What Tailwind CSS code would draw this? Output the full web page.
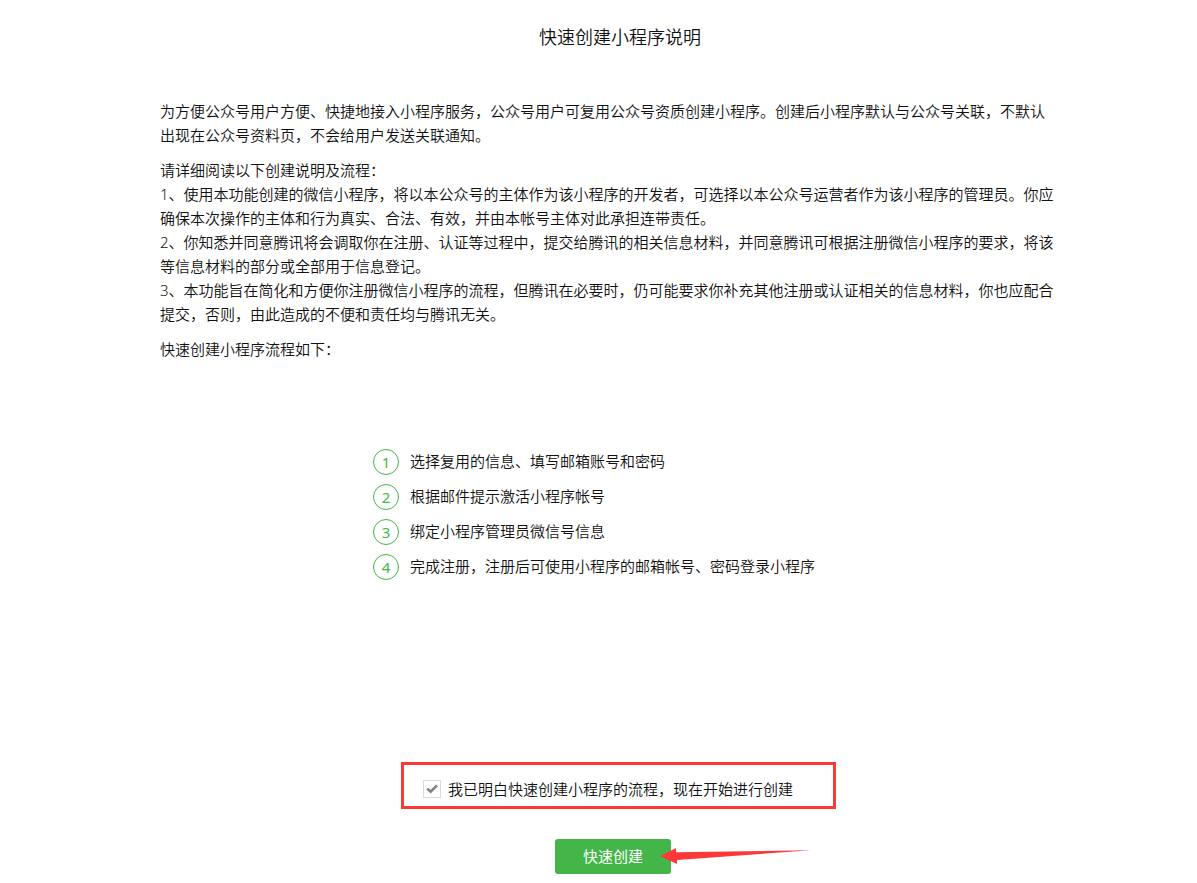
<!DOCTYPE html>
<html lang="zh-CN">
<head>
    <meta charset="UTF-8">
    <meta name="viewport" content="width=device-width, initial-scale=1.0">
    <title>快速创建小程序说明</title>
    <script src="https://cdn.jsdelivr.net/npm/@tailwindcss/browser@4"></script>
</head>
<body class="bg-white font-['Noto_Sans','Noto_Sans_CJK_SC',sans-serif] text-[15px] leading-6 font-[350] text-[#111111]">
    <main class="ml-40 mr-[117px] pt-[25px] pb-2">
        <h1 class="text-center text-[18px] leading-6">快速创建小程序说明</h1>

        <div class="mt-[50px] max-w-4xl space-y-[11px]">
            <p>为方便公众号用户方便、快捷地接入小程序服务，公众号用户可复用公众号资质创建小程序。创建后小程序默认与公众号关联，不默认出现在公众号资料页，不会给用户发送关联通知。</p>
            <div>
                <p>请详细阅读以下创建说明及流程：</p>
                <p>1、使用本功能创建的微信小程序，将以本公众号的主体作为该小程序的开发者，可选择以本公众号运营者作为该小程序的管理员。你应确保本次操作的主体和行为真实、合法、有效，并由本帐号主体对此承担连带责任。</p>
                <p>2、你知悉并同意腾讯将会调取你在注册、认证等过程中，提交给腾讯的相关信息材料，并同意腾讯可根据注册微信小程序的要求，将该等信息材料的部分或全部用于信息登记。</p>
                <p>3、本功能旨在简化和方便你注册微信小程序的流程，但腾讯在必要时，仍可能要求你补充其他注册或认证相关的信息材料，你也应配合提交，否则，由此造成的不便和责任均与腾讯无关。</p>
            </div>
            <p>快速创建小程序流程如下：</p>
        </div>

        <ol class="mt-[88px] flex flex-col gap-[9px] pl-[213px]">
            <li class="flex items-start gap-[11px]">
                <span class="flex size-[26px] items-center justify-center rounded-full border border-[#44b549] font-normal text-[#44b549]">1</span>
                选择复用的信息、填写邮箱账号和密码
            </li>
            <li class="flex items-start gap-[11px]">
                <span class="flex size-[26px] items-center justify-center rounded-full border border-[#44b549] font-normal text-[#44b549]">2</span>
                根据邮件提示激活小程序帐号
            </li>
            <li class="flex items-start gap-[11px]">
                <span class="flex size-[26px] items-center justify-center rounded-full border border-[#44b549] font-normal text-[#44b549]">3</span>
                绑定小程序管理员微信号信息
            </li>
            <li class="flex items-start gap-[11px]">
                <span class="flex size-[26px] items-center justify-center rounded-full border border-[#44b549] font-normal text-[#44b549]">4</span>
                完成注册，注册后可使用小程序的邮箱帐号、密码登录小程序
            </li>
        </ol>

        <form class="mt-[182px] flex flex-col items-center" onsubmit="return false">
            <div class="mr-[3px] w-full max-w-[435px] border-3 border-[#fc3838] px-[19px] pt-3 pb-[5px]">
                <label for="agree" class="flex items-center gap-[7px]">
                    <span class="grid size-[18px] shrink-0">
                        <input id="agree" type="checkbox" checked class="peer col-start-1 row-start-1 size-[18px] appearance-none border border-[#d9dadc] bg-white">
                        <svg class="pointer-events-none invisible col-start-1 row-start-1 size-[18px] peer-checked:visible" viewBox="0 0 18 18" fill="none" stroke="#808080" stroke-width="2.6">
                            <path d="M4.2 8.6 L7.6 11.7 L14 5.3"/>
                        </svg>
                    </span>
                    我已明白快速创建小程序的流程，现在开始进行创建
                </label>
            </div>
            <div class="relative mt-[30px] mr-[14px]">
                <button type="submit" class="h-[35px] w-[116px] rounded-[3px] bg-[#44b549] pb-0.5 font-normal text-white">快速创建</button>
                <!-- arrow pointing at the button -->
                <svg class="pointer-events-none absolute top-[9px] left-[105px]" width="152" height="18" viewBox="0 0 152 18" fill="#fc3838">
                    <path d="M0 8.3 L16 0 L16 4.3 L151 2.3 L17 12 L17 16 Z"/>
                </svg>
            </div>
        </form>
    </main>
</body>
</html>
